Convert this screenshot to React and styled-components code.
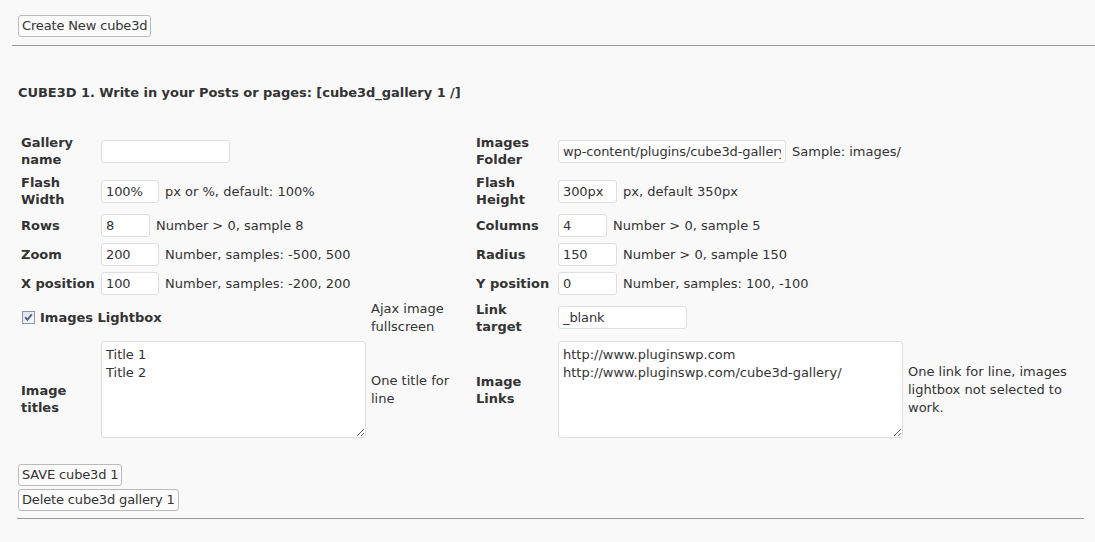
import React from "react";
import styled, { createGlobalStyle } from "styled-components";

const Global = createGlobalStyle`
  body {
    margin: 0;
    background: #f9f9f9;
    color: #333;
    font-family: "DejaVu Sans", Verdana, sans-serif;
    font-size: 13px;
  }
`;

const Page = styled.div`
  padding: 15px 0 0 12px;
  width: 1083px;
`;

const Button = styled.button`
  display: block;
  height: 22px;
  padding: 0 3px;
  margin: ${(p) => p.$mb || "0"};
  background: #fbfbfb;
  border: 1px solid #bbb;
  border-radius: 3px;
  color: #333;
  font-family: inherit;
  font-size: 13px;
  line-height: 20px;
  letter-spacing: -0.15px;
`;

const Rule = styled.div`
  height: 0;
  border-top: 1px solid #999;
  margin: ${(p) => p.$m};
`;

const Section = styled.div`
  padding: 0 0 0 5px;
`;

const Title = styled.h3`
  margin: 38px 0 30px 1px;
  font-size: 13px;
  line-height: 17px;
  font-weight: bold;
  letter-spacing: -0.05px;
`;

const Grid = styled.div`
  display: grid;
  grid-template-columns: 80px 270px 105px 82px 350px 1fr;
  margin-left: 4px;
  align-items: center;
`;

const Cell = styled.div`
  padding: 3px 0 ${(p) => (p.$tall ? "5px" : "3px")};
  display: flex;
  align-items: center;
  gap: 6px;
  white-space: nowrap;
  grid-column: ${(p) => p.$span || "auto"};
  line-height: 17px;
`;

const Label = styled(Cell)`
  font-weight: bold;
  padding-top: ${(p) => (p.$low ? "21px" : "3px")};
`;

const Note = styled(Cell)`
  white-space: normal;
  line-height: 18px;
  padding: 2px 0;
`;

const Input = styled.input`
  box-sizing: border-box;
  width: ${(p) => p.$w}px;
  height: 23px;
  padding: 0 4px;
  border: 1px solid #dfdfdf;
  border-radius: 3px;
  background: #fff;
  color: #333;
  font-family: inherit;
  font-size: 13px;
  letter-spacing: -0.1px;
  outline: none;
`;

const Area = styled.textarea`
  box-sizing: border-box;
  width: ${(p) => p.$w}px;
  height: 97px;
  padding: 4px 4px;
  border: 1px solid #dfdfdf;
  border-radius: 3px;
  background: #fff;
  color: #333;
  font-family: inherit;
  font-size: 13px;
  line-height: 18px;
  resize: both;
  outline: none;
`;

const Check = styled.span`
  width: 13px;
  height: 13px;
  margin: 0 0 0 1px;
  display: inline-flex;
  flex-shrink: 0;
`;

const CheckLabel = styled(Cell)`
  font-weight: bold;
  gap: 5px;
`;

function CheckBox() {
  return (
    <Check>
      <svg width="13" height="13" viewBox="0 0 13 13">
        <defs>
          <linearGradient id="cb" x1="0" y1="0" x2="1" y2="1">
            <stop offset="0" stopColor="#dfe3ea" />
            <stop offset="1" stopColor="#fbfbfb" />
          </linearGradient>
        </defs>
        <rect x="0.5" y="0.5" width="12" height="12" fill="url(#cb)" stroke="#8597ad" />
        <path d="M3.2 6.2 L5.4 8.8 L9.8 3.4" fill="none" stroke="#4a5f8c" strokeWidth="1.8" />
      </svg>
    </Check>
  );
}

export default function App() {
  return (
    <Page>
      <Global />
      <Button $mb="0 0 0 6px">Create New cube3d</Button>
      <Rule $m="8px 0 0 0" />
      <Section>
        <Title>CUBE3D 1. Write in your Posts or pages: [cube3d_gallery 1 /]</Title>
        <Grid>
          <Label>Gallery<br />name</Label>
          <Cell $span="span 2"><Input $w={129} defaultValue="" /></Cell>
          <Label>Images<br />Folder</Label>
          <Cell $span="span 2"><Input $w={228} defaultValue="wp-content/plugins/cube3d-gallery/" />Sample: images/</Cell>

          <Label>Flash<br />Width</Label>
          <Cell $span="span 2"><Input $w={58} defaultValue="100%" />px or %, default: 100%</Cell>
          <Label>Flash<br />Height</Label>
          <Cell $span="span 2"><Input $w={59} defaultValue="300px" />px, default 350px</Cell>

          <Label>Rows</Label>
          <Cell $span="span 2"><Input $w={49} defaultValue="8" />Number &gt; 0, sample 8</Cell>
          <Label>Columns</Label>
          <Cell $span="span 2"><Input $w={49} defaultValue="4" />Number &gt; 0, sample 5</Cell>

          <Label>Zoom</Label>
          <Cell $span="span 2"><Input $w={58} defaultValue="200" />Number, samples: -500, 500</Cell>
          <Label>Radius</Label>
          <Cell $span="span 2"><Input $w={59} defaultValue="150" />Number &gt; 0, sample 150</Cell>

          <Label>X position</Label>
          <Cell $span="span 2"><Input $w={58} defaultValue="100" />Number, samples: -200, 200</Cell>
          <Label>Y position</Label>
          <Cell $span="span 2"><Input $w={59} defaultValue="0" />Number, samples: 100, -100</Cell>

          <CheckLabel $span="span 2" $tall><CheckBox />Images Lightbox</CheckLabel>
          <Note>Ajax image<br />fullscreen</Note>
          <Label>Link<br />target</Label>
          <Cell $span="span 2" $tall><Input $w={129} defaultValue="_blank" /></Cell>

          <Label $low>Image<br />titles</Label>
          <Cell><Area $w={265} defaultValue={"Title 1\nTitle 2"} /></Cell>
          <Note>One title for<br />line</Note>
          <Label>Image<br />Links</Label>
          <Cell><Area $w={345} defaultValue={"http://www.pluginswp.com\nhttp://www.pluginswp.com/cube3d-gallery/"} /></Cell>
          <Note>One link for line, images lightbox not selected to work.</Note>
        </Grid>
        <Button $mb="23px 0 3px 1px">SAVE cube3d 1</Button>
        <Button $mb="0 0 0 1px">Delete cube3d gallery 1</Button>
        <Rule $m="7px 11px 0 0" />
      </Section>
    </Page>
  );
}
